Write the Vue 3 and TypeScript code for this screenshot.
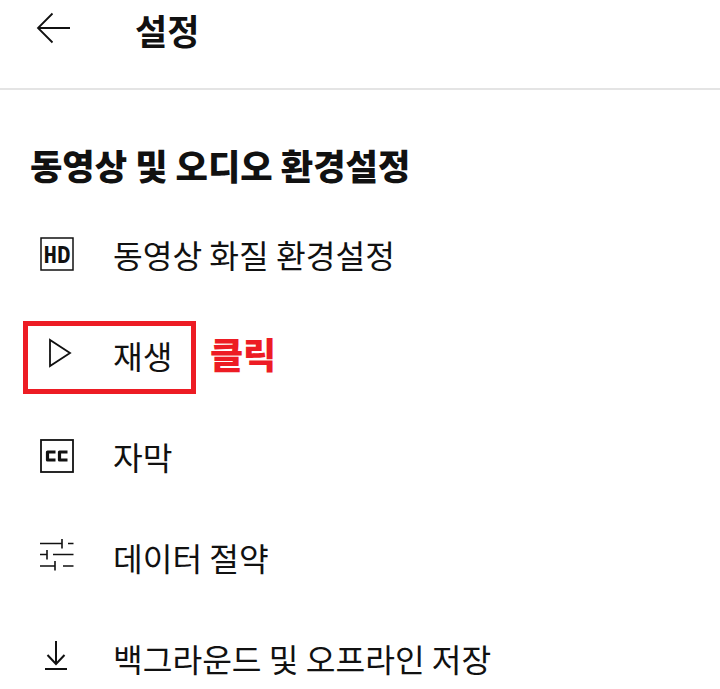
<template>
  <div class="page">
    <header class="top-bar">
      <button class="back" aria-label="뒤로">
        <svg width="36" height="32" viewBox="0 0 36 32" fill="none" stroke="#111" stroke-width="1.8">
          <path d="M34 16H2M16.500 1.500L2 16l14.500 14.500" />
        </svg>
      </button>
      <h1 class="title">설정</h1>
    </header>

    <section class="section">
      <h2 class="section-title">동영상 및 오디오 환경설정</h2>
      <ul class="menu">
        <li v-for="item in items" :key="item.id" class="row">
          <span class="icon">
            <svg v-if="item.id === 'hd'" width="34" height="34" viewBox="0 0 34 34">
              <rect x="1" y="1" width="32" height="32" fill="none" stroke="#111" stroke-width="1.500" />
              <text x="3.500" y="26" textLength="27" lengthAdjust="spacingAndGlyphs" class="hd-text">HD</text>
            </svg>
            <svg v-else-if="item.id === 'play'" class="play" width="24" height="30" viewBox="0 0 24 30" fill="none" stroke="#111" stroke-width="1.800">
              <path d="M2 2v26l20-13z" />
            </svg>
            <svg v-else-if="item.id === 'cc'" width="34" height="34" viewBox="0 0 34 34">
              <rect x="1" y="1" width="32" height="32" fill="none" stroke="#111" stroke-width="1.800" />
              <path d="M15.500 13H7.500v8h8M27.500 13h-8v8h8" fill="none" stroke="#111" stroke-width="3.200" stroke-linejoin="round" />
            </svg>
            <svg v-else-if="item.id === 'data'" class="data" width="34" height="32" viewBox="0 0 34 32" fill="none" stroke="#111" stroke-width="1.600">
              <path d="M0 4.500h22M22 0v9.500M28 4.500h5.500M0 15.500h7M7 11v9.500M13 15.500h20.500M0 27h15M15 22v9.500M23 27h10.500" />
            </svg>
            <svg v-else class="download" width="22" height="30" viewBox="0 0 22 30" fill="none" stroke="#111" stroke-width="2">
              <path d="M11 1v23M2.500 15l8.500 9 8.500-9M0 29h22" />
            </svg>
          </span>
          <span class="label">{{ item.label }}</span>
          <span v-if="item.id === 'play'" class="highlight"></span>
          <span v-if="item.id === 'play'" class="click-note">클릭</span>
        </li>
      </ul>
    </section>
  </div>
</template>

<script setup lang="ts">
interface MenuItem {
  id: string
  label: string
}

const items: MenuItem[] = [
  { id: 'hd', label: '동영상 화질 환경설정' },
  { id: 'play', label: '재생' },
  { id: 'cc', label: '자막' },
  { id: 'data', label: '데이터 절약' },
  { id: 'download', label: '백그라운드 및 오프라인 저장' },
]
</script>

<style>
html, body { background: #fff; overflow: hidden; }
</style>

<style scoped>
.page {
  width: 720px;
  height: 689px;
  overflow: hidden;
  background: #fff;
  color: #111;
  font-family: "Noto Sans CJK KR", "Noto Sans", sans-serif;
}
.top-bar {
  box-sizing: border-box;
  height: 90px;
  display: flex;
  align-items: flex-start;
  padding: 12px 0 0 36px;
  border-bottom: 2px solid #e4e4e4;
}
.back { width: 99px; padding: 0; border: none; background: none; text-align: left; }
.back svg { display: block; }
.title { margin: -5px 0 0; font-size: 35px; font-weight: 700; line-height: 46px; }
.section { padding-top: 52px; }
.section-title { margin: 0 0 0 30px; font-size: 35.2px; font-weight: 900; line-height: 46px; }
.menu { list-style: none; margin: 15px 0 0; padding: 0; }
.row {
  position: relative;
  height: 101px;
  display: flex;
  align-items: center;
  padding-left: 40px;
}
.icon { width: 73px; flex: none; display: flex; align-items: center; }
.play { margin: 0 0 4px 8px; }
.data { margin-bottom: 4px; }
.download { margin: 0 0 6px 5px; }
.label { font-size: 32.3px; line-height: 46px; white-space: nowrap; }
.hd-text { font: 700 25px "Liberation Mono", monospace; fill: #111; }
.highlight {
  position: absolute;
  left: 23px;
  top: 17px;
  width: 173px;
  height: 73px;
  box-sizing: border-box;
  border: 5px solid #ed1c24;
}
.click-note {
  position: absolute;
  left: 210px;
  top: 25px;
  color: #ed1c24;
  font-size: 36px;
  font-weight: 900;
  line-height: 48px;
}
</style>
